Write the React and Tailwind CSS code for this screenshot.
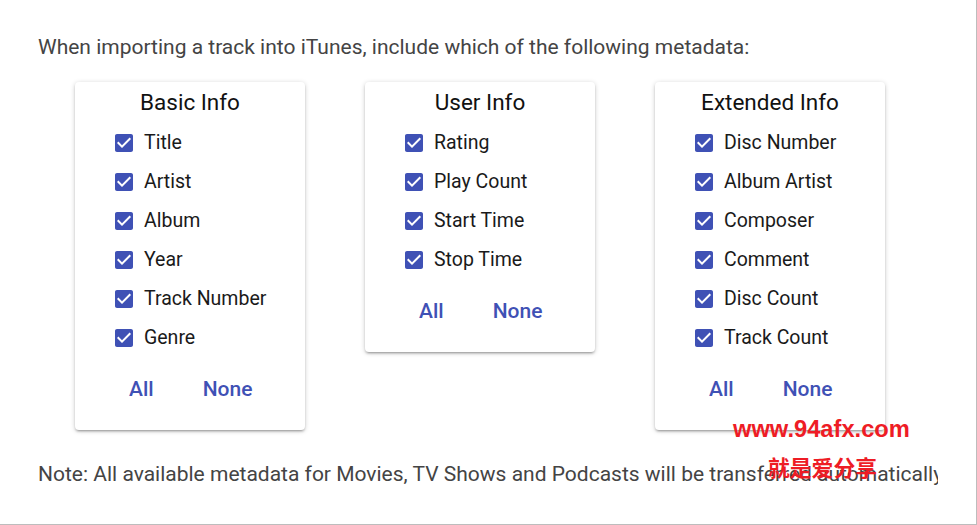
import React, { useState } from 'react';

const groups = [
  {
    title: 'Basic Info',
    items: ['Title', 'Artist', 'Album', 'Year', 'Track Number', 'Genre'],
  },
  {
    title: 'User Info',
    items: ['Rating', 'Play Count', 'Start Time', 'Stop Time'],
  },
  {
    title: 'Extended Info',
    items: ['Disc Number', 'Album Artist', 'Composer', 'Comment', 'Disc Count', 'Track Count'],
  },
];

const CheckIcon = ({ checked }) => (
  <svg width="24" height="24" viewBox="0 0 24 24" className="shrink-0">
    {checked ? (
      <path
        fill="#3f51b5"
        d="M19 3H5c-1.11 0-2 .9-2 2v14c0 1.1.89 2 2 2h14c1.11 0 2-.9 2-2V5c0-1.1-.89-2-2-2zm-9 14l-5-5 1.41-1.41L10 14.17l7.59-7.59L19 8l-9 9z"
      />
    ) : (
      <path
        fill="#757575"
        d="M19 5v14H5V5h14m0-2H5c-1.1 0-2 .9-2 2v14c0 1.1.9 2 2 2h14c1.1 0 2-.9 2-2V5c0-1.1-.9-2-2-2z"
      />
    )}
  </svg>
);

const MetadataCard = ({ group }) => {
  const [checked, setChecked] = useState(group.items.map(() => true));

  const toggle = (i) => {
    setChecked(prev => prev.map((v, j) => (j === i ? !v : v)));
  };

  return (
    <div className="w-[230px] bg-white rounded-[4px] shadow-[0_1px_5px_rgba(0,0,0,0.2),0_2px_2px_rgba(0,0,0,0.14),0_3px_1px_-2px_rgba(0,0,0,0.12)] pt-[6px] pb-[22px]">
      <h3 className="text-center text-[22.5px] leading-[28px] text-[#111]">{group.title}</h3>
      <div className="mt-[7px]">
        {group.items.map((item, i) => (
          <label
            key={item}
            className="h-[39px] flex items-center pl-[37px] gap-[8px] cursor-pointer"
            onClick={() => toggle(i)}
          >
            <CheckIcon checked={checked[i]} />
            <span className="text-[19.5px] text-[#1a1a1a]">{item}</span>
          </label>
        ))}
      </div>
      <div className="mt-[15px] h-[36px] flex items-center pl-[54px] gap-[49px] text-[21px] font-medium text-[#3f51b5]">
        <button onClick={() => setChecked(group.items.map(() => true))}>All</button>
        <button onClick={() => setChecked(group.items.map(() => false))}>None</button>
      </div>
    </div>
  );
};

const App = () => {
  return (
    <div
      className="relative w-[977px] h-[525px] bg-white border-r border-b border-[#bdbdbd] overflow-hidden"
      style={{ fontFamily: 'Roboto, "Noto Sans CJK SC", sans-serif' }}
    >
      <p className="pt-[33px] pl-[38px] text-[21px] leading-[28px] text-[#444]">
        When importing a track into iTunes, include which of the following metadata:
      </p>

      <div className="mt-[21px] ml-[75px] flex items-start gap-[60px]">
        {groups.map(g => (
          <MetadataCard key={g.title} group={g} />
        ))}
      </div>

      <p className="mt-[30px] ml-[38px] w-[900px] overflow-hidden whitespace-nowrap text-[21px] leading-[28px] text-[#444]">
        Note: All available metadata for Movies, TV Shows and Podcasts will be transferred automatically
      </p>

      {/* watermark */}
      <div className="absolute left-[733px] top-[414px] text-[23.7px] leading-[30px] font-bold text-[#ee1c25]" style={{ fontFamily: '"Liberation Sans", Arial, sans-serif' }}>
        www.94afx.com
      </div>
      <div className="absolute left-[768px] top-[452px] text-[21.8px] leading-[30px] font-bold text-[#ee1c25]" style={{ fontFamily: '"Noto Sans CJK SC", sans-serif' }}>
        就是爱分享
      </div>
    </div>
  );
};

export default App;
